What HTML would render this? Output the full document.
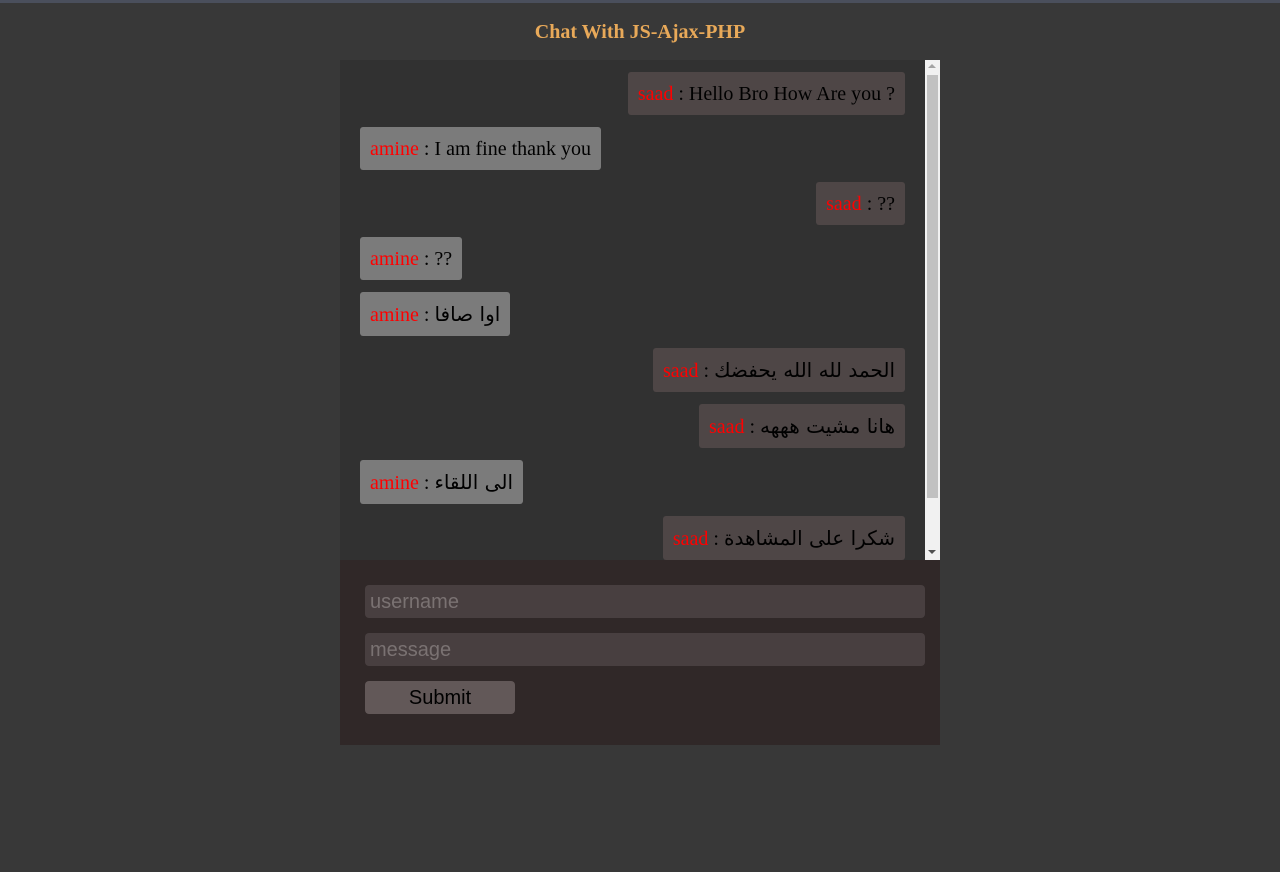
<!DOCTYPE html>
<html><head><meta charset="utf-8"><style>
html,body{margin:0;padding:0;}
body{width:1280px;height:872px;background:#383838;position:relative;overflow:hidden;font-family:"Liberation Serif",serif;}
.topbar{position:absolute;left:0;top:0;width:1280px;height:3px;background:#4a4f5c;}
h1{position:absolute;top:19px;left:0;width:1280px;text-align:center;margin:0;font-size:20px;font-weight:bold;color:#e8a959;line-height:26px;}
.chat{position:absolute;left:340px;top:60px;width:600px;height:500px;background:#313131;}
.sb{position:absolute;left:925px;top:60px;width:15px;height:500px;background:#f1f1f1;}
.thumb{position:absolute;left:927px;top:75px;width:11px;height:423px;background:#c1c1c1;}
.au{position:absolute;left:928px;top:64px;width:0;height:0;border-left:4px solid transparent;border-right:4px solid transparent;border-bottom:4px solid #a3a3a3;}
.ad{position:absolute;left:928px;top:550px;width:0;height:0;border-left:4px solid transparent;border-right:4px solid transparent;border-top:4px solid #505050;}
.m{position:absolute;height:43px;line-height:44px;padding:0 10px;border-radius:3px;font-size:20px;color:#000;white-space:nowrap;}
.r{right:375px;background:#4e4646;}
.l{left:360px;background:#7b7b7b;}
.n{color:#f00;}
.ar{font-family:"DejaVu Sans",sans-serif;font-size:20px;}
.form{position:absolute;left:340px;top:560px;width:600px;height:185px;background:#302828;}
.in{position:absolute;left:365px;width:555px;height:33px;padding-left:5px;background:#483f40;border-radius:4px;font-family:"Liberation Sans",sans-serif;font-size:20px;line-height:34px;color:#7a7272;}
.btn{position:absolute;left:365px;top:681px;width:150px;height:33px;background:#625858;border-radius:4px;font-family:"Liberation Sans",sans-serif;font-size:20px;line-height:34px;text-align:center;color:#000;}
</style></head><body>
<div class="topbar"></div>
<h1>Chat With JS-Ajax-PHP</h1>
<div class="chat"></div>
<div class="m r" style="top:72px"><span class="n">saad</span> : Hello Bro How Are you ?</div>
<div class="m l" style="top:127px"><span class="n">amine</span> : I am fine thank you</div>
<div class="m r" style="top:182px"><span class="n">saad</span> : ??</div>
<div class="m l" style="top:237px"><span class="n">amine</span> : ??</div>
<div class="m l" style="top:292px;height:44px;line-height:44px"><span class="n">amine</span> : <span class="ar">اوا صافا</span></div>
<div class="m r" style="top:348px;height:44px;line-height:44px"><span class="n">saad</span> : <span class="ar">الحمد لله الله يحفضك</span></div>
<div class="m r" style="top:404px;height:44px;line-height:44px"><span class="n">saad</span> : <span class="ar">هانا مشيت هههه</span></div>
<div class="m l" style="top:460px;height:44px;line-height:44px"><span class="n">amine</span> : <span class="ar">الى اللقاء</span></div>
<div class="m r" style="top:516px;height:44px;line-height:44px"><span class="n">saad</span> : <span class="ar">شكرا على المشاهدة</span></div>
<div class="sb"></div><div class="thumb"></div><div class="au"></div><div class="ad"></div>
<div class="form"></div>
<div class="in" style="top:585px">username</div>
<div class="in" style="top:633px">message</div>
<div class="btn">Submit</div>
</body></html>
